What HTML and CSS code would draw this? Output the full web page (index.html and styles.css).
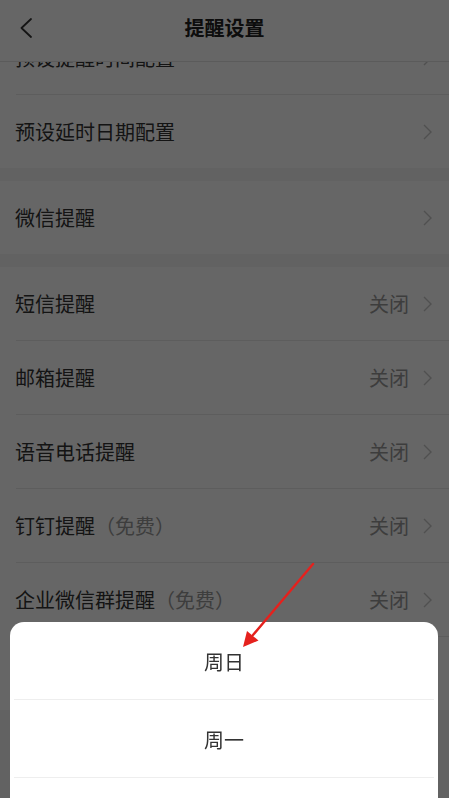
FILE: index.html
```html
<!DOCTYPE html>
<html lang="zh-CN">
<head>
<meta charset="utf-8">
<title>提醒设置</title>
<link rel="stylesheet" href="styles.css">
</head>
<body>
<div class="app">
  <header class="header">
    <div class="back">
      <svg width="12" height="20" viewBox="0 0 12 20"><polyline points="11,1 1.5,10 11,19" fill="none" stroke="#333" stroke-width="1.8" stroke-linecap="round" stroke-linejoin="round"/></svg>
    </div>
    <div class="title">提醒设置</div>
    <div></div>
  </header>
  <main class="scroll">
    <div class="list">
      <section class="group">
        <div class="row"><span class="label">预设提醒时间配置</span><span class="right"><svg class="chev" width="9" height="16" viewBox="0 0 9 16"><polyline points="1,1 8,8 1,15" fill="none" stroke="#c7c7c7" stroke-width="1.4"/></svg></span></div>
        <div class="row"><span class="label">预设延时日期配置</span><span class="right"><svg class="chev" width="9" height="16" viewBox="0 0 9 16"><polyline points="1,1 8,8 1,15" fill="none" stroke="#c7c7c7" stroke-width="1.4"/></svg></span></div>
      </section>
      <section class="group">
        <div class="row"><span class="label">微信提醒</span><span class="right"><svg class="chev" width="9" height="16" viewBox="0 0 9 16"><polyline points="1,1 8,8 1,15" fill="none" stroke="#c7c7c7" stroke-width="1.4"/></svg></span></div>
      </section>
      <section class="group">
        <div class="row"><span class="label">短信提醒</span><span class="right"><span class="value">关闭</span><svg class="chev" width="9" height="16" viewBox="0 0 9 16"><polyline points="1,1 8,8 1,15" fill="none" stroke="#c7c7c7" stroke-width="1.4"/></svg></span></div>
        <div class="row"><span class="label">邮箱提醒</span><span class="right"><span class="value">关闭</span><svg class="chev" width="9" height="16" viewBox="0 0 9 16"><polyline points="1,1 8,8 1,15" fill="none" stroke="#c7c7c7" stroke-width="1.4"/></svg></span></div>
        <div class="row"><span class="label">语音电话提醒</span><span class="right"><span class="value">关闭</span><svg class="chev" width="9" height="16" viewBox="0 0 9 16"><polyline points="1,1 8,8 1,15" fill="none" stroke="#c7c7c7" stroke-width="1.4"/></svg></span></div>
        <div class="row"><span class="label">钉钉提醒<span class="note">（免费）</span></span><span class="right"><span class="value">关闭</span><svg class="chev" width="9" height="16" viewBox="0 0 9 16"><polyline points="1,1 8,8 1,15" fill="none" stroke="#c7c7c7" stroke-width="1.4"/></svg></span></div>
        <div class="row"><span class="label">企业微信群提醒<span class="note">（免费）</span></span><span class="right"><span class="value">关闭</span><svg class="chev" width="9" height="16" viewBox="0 0 9 16"><polyline points="1,1 8,8 1,15" fill="none" stroke="#c7c7c7" stroke-width="1.4"/></svg></span></div>
        <div class="row"></div>
      </section>
    </div>
  </main>
</div>

<div class="mask"></div>

<div class="sheet">
  <div class="opt">周日</div>
  <div class="sep"></div>
  <div class="opt">周一</div>
  <div class="sep"></div>
  <div class="opt"></div>
</div>

<svg class="arrow" width="449" height="798" viewBox="0 0 449 798">
  <line x1="313" y1="564" x2="253" y2="635" stroke="#e5211d" stroke-width="2.4" stroke-linecap="round"/>
  <polygon points="243,647 247,631 258.5,640.5" fill="#e5211d"/>
</svg>
</body>
</html>
```

FILE: styles.css
```css
* { box-sizing: border-box; }

html, body {
  margin: 0;
  padding: 0;
}

body {
  width: 449px;
  height: 798px;
  overflow: hidden;
  font-family: "Noto Sans CJK SC", "Noto Sans", sans-serif;
  color: #333;
  background: #f4f4f4;
}

.app {
  display: flex;
  flex-direction: column;
  height: 798px;
}

.header {
  height: 62px;
  flex: none;
  display: grid;
  grid-template-columns: 1fr auto 1fr;
  align-items: center;
  padding: 0 20px;
  background: #fff;
  border-bottom: 1px solid #e3e3e3;
  position: relative;
  z-index: 1;
}

.back {
  display: flex;
  align-items: center;
  height: 20px;
  margin-top: -6px;
}

.title {
  font-size: 20px;
  font-weight: 700;
  color: #222;
  margin-top: -6px;
}

.scroll {
  flex: 1;
  overflow: hidden;
}

.list {
  margin-top: -41px;
}

.group {
  background: #fff;
  padding-left: 16px;
  margin-bottom: 13px;
}

.row {
  height: 73px;
  display: flex;
  align-items: center;
  justify-content: space-between;
  padding-right: 17px;
}

.row + .row {
  height: 74px;
  border-top: 1px solid #e8e8e8;
}

.label {
  font-size: 20px;
  color: #333;
  white-space: nowrap;
  margin-left: -1px;
}

.note {
  color: #999;
}

.right {
  display: flex;
  align-items: center;
  gap: 14px;
}

.value {
  font-size: 20px;
  color: #999;
}

.chev {
  display: block;
}

.mask {
  position: fixed;
  inset: 0;
  background: rgba(0, 0, 0, 0.6);
  z-index: 10;
}

.sheet {
  position: fixed;
  left: 10px;
  width: 428px;
  top: 622px;
  bottom: 0;
  background: #fff;
  border-radius: 14px 14px 0 0;
  overflow: hidden;
  z-index: 11;
}

.opt {
  height: 77px;
  display: flex;
  align-items: center;
  justify-content: center;
  font-size: 20px;
  color: #333;
  padding-top: 2px;
}

.sep {
  height: 1px;
  margin: 0 4px;
  background: #eeeeee;
}

.arrow {
  position: fixed;
  left: 0;
  top: 0;
  pointer-events: none;
  z-index: 12;
}
```
